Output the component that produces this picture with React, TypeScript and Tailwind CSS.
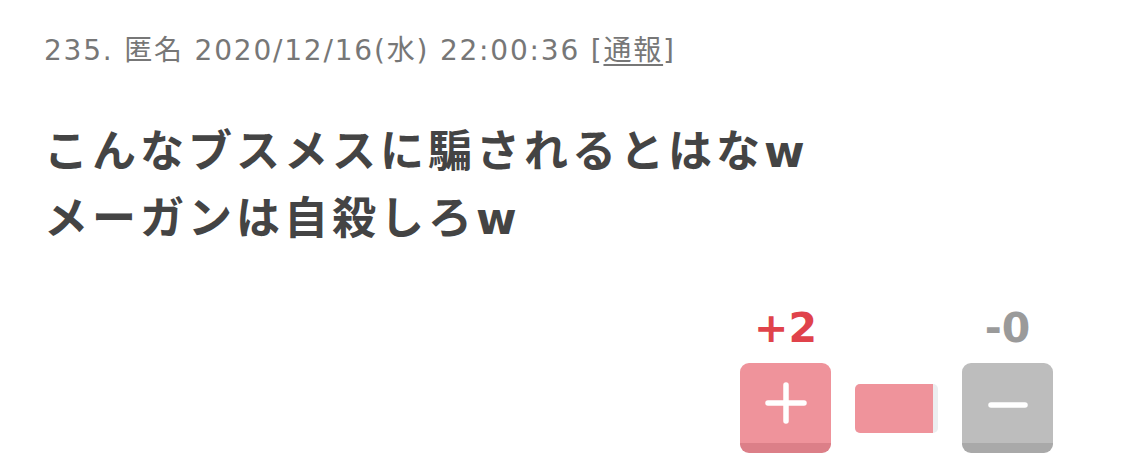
import React from 'react';

const jp = { fontFamily: '"DejaVu Sans", "Noto Sans CJK JP", sans-serif' };

export default function App() {
  return (
    <div className="w-[1125px] h-[468px] bg-white overflow-hidden" style={jp}>
      <div className="pt-[33px] pl-[44px]">
        {/* meta line */}
        <p className="text-[28px] leading-[36px] tracking-[1.8px] text-[#777777]">
          235. 匿名 2020/12/16(水) 22:00:36 [<span className="underline underline-offset-4">通報</span>]
        </p>

        {/* body */}
        <div className="mt-[49px] text-[44px] leading-[67px] tracking-[4px] font-bold text-[#444444]">
          <p>こんなブスメスに騙されるとはなw</p>
          <p>メーガンは自殺しろw</p>
        </div>
      </div>

      {/* votes */}
      <div className="flex justify-end pr-[72px] mt-[54px]">
        <div className="flex items-end gap-[24px]">
          <div className="flex flex-col items-center w-[91px]">
            <span className="text-[41px] leading-[44px] font-bold text-[#e0434b] mb-[13px]">+2</span>
            <button className="w-[91px] h-[90px] rounded-[9px] bg-[#ef939b] border-b-[10px] border-[#dc7f88] flex items-center justify-center">
              <svg width="42" height="42" viewBox="0 0 42 42">
                <path d="M21 3v36M3 21h36" stroke="white" strokeWidth="5.5" strokeLinecap="round" />
              </svg>
            </button>
          </div>

          <div className="mb-[20px] w-[83px] h-[49px] rounded-[5px] bg-[#eceef0] overflow-hidden">
            <div className="h-full w-[78px] bg-[#ef939b]" />
          </div>

          <div className="flex flex-col items-center w-[91px]">
            <span className="text-[41px] leading-[44px] font-bold text-[#9a9a9a] mb-[13px]">-0</span>
            <button className="w-[91px] h-[90px] rounded-[9px] bg-[#bdbdbd] border-b-[10px] border-[#a9a9a9] flex items-center justify-center">
              <svg width="42" height="8" viewBox="0 0 42 8" className="mt-[4px]">
                <path d="M4 4h34" stroke="white" strokeWidth="5.5" strokeLinecap="round" />
              </svg>
            </button>
          </div>
        </div>
      </div>
    </div>
  );
}
